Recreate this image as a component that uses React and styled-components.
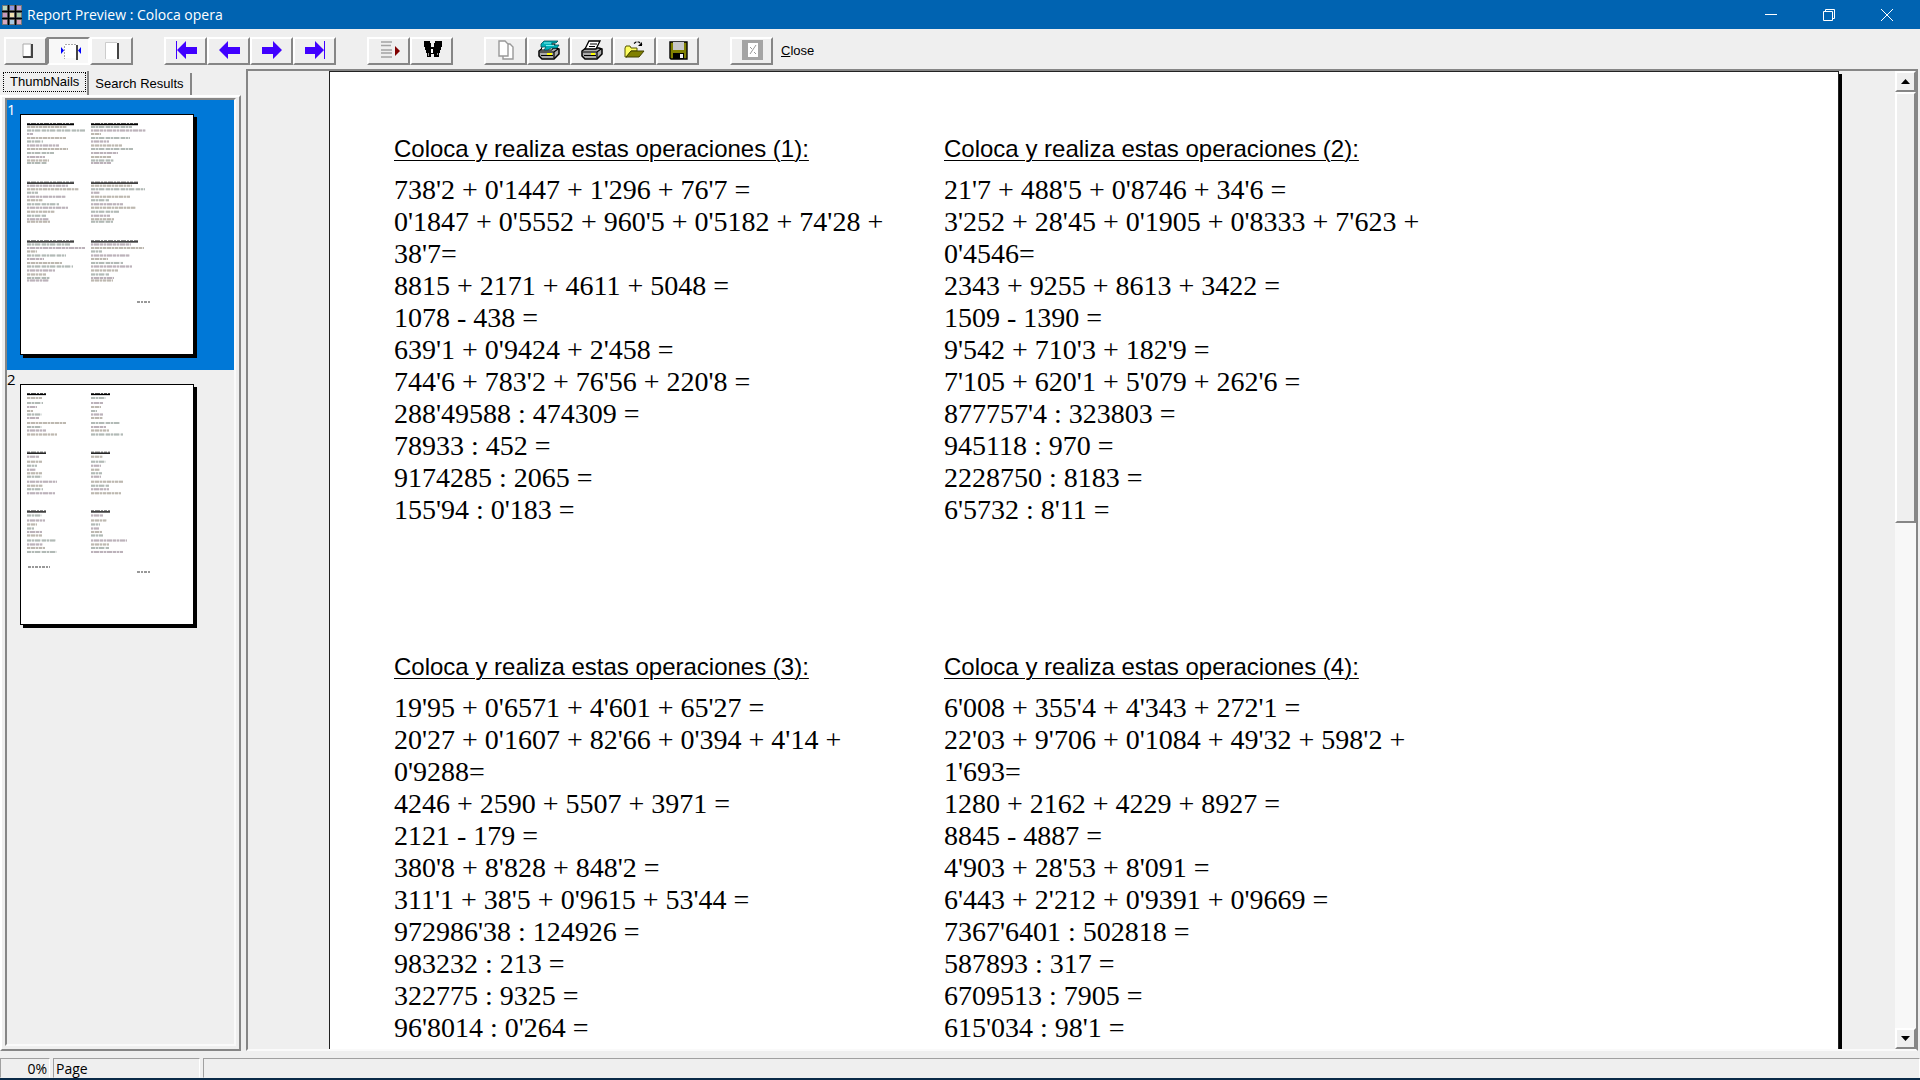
import React from 'react'
import styled, { createGlobalStyle, css } from 'styled-components'

const GlobalStyle = createGlobalStyle`
	* {
		box-sizing: border-box;
	}

	body {
		margin: 0;
		background: #efefef;
		color: #000;
		font-family: 'Liberation Sans', Arial, sans-serif;
		font-size: 13px;
	}

	button {
		padding: 0;
		color: inherit;
		font: inherit;
	}
`

const raised = css`
	border: 2px solid;
	border-color: #fff #868686 #868686 #fff;
`

const Window = styled.div`
	display: flex;
	flex-direction: column;
	height: 100vh;
	overflow: hidden;
	border-bottom: 2px solid #0a2a48;
`

/* title bar */

const TitleBar = styled.header`
	display: flex;
	align-items: center;
	flex: none;
	height: 29px;
	padding: 0 4px 0 2px;
	background: #0063b1;
	color: #fff;
`

const Title = styled.h1`
	flex: 1;
	margin: 0 0 0 5px;
	font-family: 'Open Sans', 'Noto Sans', sans-serif;
	font-size: 14px;
	font-weight: 400;
	line-height: 20px;
`

const CaptionButton = styled.button`
	display: flex;
	align-items: center;
	justify-content: center;
	width: 58px;
	height: 28px;
	border: 0;
	background: none;
`

/* toolbar */

const Toolbar = styled.div`
	display: flex;
	align-items: center;
	flex: none;
	gap: 31px;
	height: 40px;
	padding: 3px 4px 0;
`

const ToolGroup = styled.div`
	display: flex;
	align-items: center;
`

const ToolButton = styled.button`
	display: flex;
	align-items: center;
	justify-content: center;
	width: 43px;
	height: 28px;
	background: #efefef;
	${raised}
	${props =>
		props.$pressed &&
		css`
			background: #f8f8f8;
			border-color: #868686 #fff #fff #868686;
		`}
`

const CloseButton = styled.button`
	margin-left: 8px;
	border: 0;
	background: none;
	line-height: 20px;
`

/* side panel */

const Body = styled.div`
	display: flex;
	flex: 1;
	gap: 5px;
	min-height: 0;
`

const Side = styled.aside`
	display: flex;
	flex-direction: column;
	flex: none;
	width: 241px;
`

const Tabs = styled.div`
	display: flex;
	align-items: flex-end;
	padding-left: 3px;
	height: 26px;
`

const Tab = styled.button`
	height: 22px;
	padding: 0 6px;
	border: 0;
	border-right: 2px solid #868686;
	background: none;
	line-height: 20px;
	${props =>
		props.$active &&
		css`
			height: 24px;
			padding: 0 1px 3px 0;
			line-height: 18px;
		`}
`

const FocusMark = styled.span`
	display: block;
	padding: 0 6px;
	border: 1px dotted #000;
`

const TabPanel = styled.div`
	display: flex;
	flex: 1;
	min-height: 0;
	padding: 1px 3px 3px;
	${raised}
`

const ThumbList = styled.div`
	flex: 1;
	overflow: hidden;
	border: 2px solid;
	border-color: #868686 #fafafa #fafafa #868686;
`

const ThumbItem = styled.button`
	display: grid;
	grid-template-columns: 13px auto;
	align-items: start;
	justify-content: start;
	width: 100%;
	height: 270px;
	border: 0;
	background: ${props => (props.$selected ? '#0078d7' : 'transparent')};
	color: ${props => (props.$selected ? '#fff' : '#000')};
	font-family: 'Open Sans', 'Noto Sans', sans-serif;
	font-size: 15px;
	line-height: 18px;
	text-align: left;
`

const ThumbPage = styled.svg`
	width: 174px;
	height: 241px;
	margin-top: 14px;
	border: 1px solid #000;
	background: #fff;
	box-shadow: 3px 3px 0 #000;
`

/* document area */

const Viewer = styled.main`
	display: flex;
	flex: 1;
	min-width: 0;
	margin-right: 2px;
	border: 2px solid;
	border-color: #868686 #868686 #fafafa #868686;
`

const Canvas = styled.div`
	display: flex;
	flex: 1;
	min-width: 0;
	overflow: hidden;
	padding: 0 56px 0 81px;
`

const Sheet = styled.article`
	display: grid;
	flex: 1;
	grid-template-columns: repeat(2, minmax(0, 510px));
	align-content: start;
	gap: 125px 40px;
	padding: 61px 0 0 64px;
	border: 1px solid #222;
	border-bottom: 0;
	background: #fff;
	box-shadow: 3px 3px 0 #000;
`

const Exercise = styled.section`
	line-height: 32px;
`

const ExerciseTitle = styled.h2`
	margin: 0 0 9px;
	font-size: 24px;
	font-weight: 400;
	text-decoration: underline;
	text-decoration-thickness: 1px;
	text-underline-offset: 3px;
`

const Operation = styled.p`
	margin: 0;
	font-family: 'Liberation Serif', 'Times New Roman', serif;
	font-size: 28px;
`

const ScrollBar = styled.div`
	display: flex;
	flex-direction: column;
	flex: none;
	width: 21px;
	background: #f8f8f8;
`

const ScrollButton = styled.button`
	display: flex;
	align-items: center;
	justify-content: center;
	height: 21px;
	background: #efefef;
	${raised}
`

const ScrollTrack = styled.div`
	flex: 1;
`

const ScrollThumb = styled.div`
	height: 46%;
	background: #efefef;
	${raised}
`

/* status bar */

const StatusBar = styled.footer`
	display: grid;
	grid-template-columns: 50px 147px 1fr;
	flex: none;
	gap: 3px;
	padding-top: 7px;
	font-family: 'Open Sans', 'Noto Sans', sans-serif;
	font-size: 14px;
	line-height: 20px;
`

const StatusCell = styled.div`
	height: 20px;
	padding: 0 2px;
	border: 1px solid;
	border-color: #a0a0a0 #fff #efefef #a0a0a0;
	text-align: ${props => props.$align || 'left'};
`

const Icon = ({ children }) => (
	<svg width="30" height="22" viewBox="0 0 30 22" aria-hidden="true">
		{children}
	</svg>
)

const ARROW = '#4000ff'

const icons = {
	wholePage: (
		<Icon>
			<path d="M12 4h8v13h-8z" fill="#fff" stroke="#aaa" />
			<path d="M20 4h2v14H12v-2h8z" fill="#444" />
		</Icon>
	),
	pageWidth: (
		<Icon>
			<path d="M10 4h13v14H10z" fill="#fff" />
			<path d="M11 4.5h11M10.500 6v13" stroke="#aaa" strokeDasharray="2 1" />
			<path d="M22 5h2v15h-2z" fill="#444" />
			<path d="M7 7v7l3-3.500zM27 7v7l-3-3.500z" fill="#00f" />
		</Icon>
	),
	actualSize: (
		<Icon>
			<path d="M8 3h12v16H8z" fill="#fff" />
			<path d="M8.500 19V2.500H20" fill="none" stroke="#ccc" />
			<path d="M20 3h2v16h-2z" fill="#444" />
		</Icon>
	),
	first: (
		<Icon>
			<path d="M5 1h1v18H5zM6 10l9-9v6h11v7H15v5z" fill={ARROW} />
		</Icon>
	),
	prev: (
		<Icon>
			<path d="M5 10l9-9v6h12v7H14v5z" fill={ARROW} />
		</Icon>
	),
	next: (
		<Icon>
			<path d="M25 10l-9-9v6H5v7h11v5z" fill={ARROW} />
		</Icon>
	),
	last: (
		<Icon>
			<path d="M24 1h1v18h-1zM24 10l-9-9v6H5v7h10v5z" fill={ARROW} />
		</Icon>
	),
	goTo: (
		<Icon>
			<path d="M7 2h11M7 5.500h10M7 10h11M7 13h11M7 17h11" stroke="#a4a4a4" strokeWidth="1.400" />
			<path d="M21 6v10l5-5z" fill="#800000" />
		</Icon>
	),
	find: (
		<Icon>
			<path d="M7 1h6v2h1v4h3V3h1V1h7v6h-1v3h-1v3h-1v4h-5v-3h-3v3h-4v-4H9v-3H8V7H7z" />
			<path d="M14 9h2v4h-2z" fill="#fff" />
			<path d="M11.500 13v3M20.500 13v2" stroke="#bbb" strokeWidth=".8" />
		</Icon>
	),
	copy: (
		<Icon>
			<path d="M12 4h7l3 3v12H12z" fill="#fff" stroke="#999" strokeWidth="1.400" />
			<path d="M8 1h6l3 3v12H8z" fill="#fff" stroke="#999" strokeWidth="1.400" />
		</Icon>
	),
	printSetup: (
		<Icon>
			<path d="M5 11l4-3h13l3 1v5l-5 5H8l-3-3z" fill="#aaa" stroke="#000" strokeWidth="1.500" />
			<path d="M9 4h12l-3 6H7z" fill="#fff" stroke="#000" />
			<path d="M7 4l3-3h14l-2 2h-4v2h7l-2 3h-6l-3 2h-4l2-3H7z" fill="#00b0b8" stroke="#005058" strokeWidth=".8" />
			<path d="M10 3h7M12 5.500h8" stroke="#9ff" strokeWidth=".8" />
			<path d="M6 12h14l4-3M20 12v6M7 15.500h12" fill="none" stroke="#000" strokeWidth="1.200" />
			<path d="M13 13h5v2h-5z" fill="#ff0" />
		</Icon>
	),
	print: (
		<Icon>
			<path d="M5 11l4-3h13l3 1v5l-5 5H8l-3-3z" fill="#aaa" stroke="#000" strokeWidth="1.500" />
			<path d="M12 1h11l-4 8H8z" fill="#fff" stroke="#000" strokeWidth="1.300" />
			<path d="M13 4h7M12 6.500h6M6 12h14l4-3M20 12v6M7 15.500h12" fill="none" stroke="#000" strokeWidth="1.200" />
			<path d="M14 13h4v2h-4z" fill="#ff0" />
		</Icon>
	),
	open: (
		<Icon>
			<path d="M5 8l1-2h4l1 2h6v3h-6l-4 6H5z" fill="#ffff60" stroke="#555500" />
			<path d="M11 11h13l-5 6H6z" fill="#808000" stroke="#404000" />
			<path d="M14 3.500l2-1.500h3l3 3" fill="none" stroke="#000" strokeWidth="1.200" strokeDasharray="3 1" />
			<path d="M22 2v4h-4z" />
		</Icon>
	),
	save: (
		<Icon>
			<path d="M7 2h17v17H8l-1-1z" fill="#808000" stroke="#000" strokeWidth="1.400" />
			<path d="M10 2h11v8H10z" fill="#c8c8c8" />
			<path d="M10 13h11v6H10z" />
			<path d="M17 14h3v4h-3z" fill="#eee" />
		</Icon>
	),
	exit: (
		<Icon>
			<path d="M5 0h21v20H5z" fill="#a4a4a4" />
			<path d="M11 3h10v14H11z" fill="#fff" />
			<path d="M13 14l6-9M13 7l2 2M17 12l2 2" fill="none" stroke="#999" />
		</Icon>
	)
}

const toolGroups = [
	[
		['Whole page', 'wholePage'],
		['Page width', 'pageWidth'],
		['Actual size', 'actualSize']
	],
	[
		['First page', 'first'],
		['Previous page', 'prev'],
		['Next page', 'next'],
		['Last page', 'last']
	],
	[
		['Go to page', 'goTo'],
		['Find', 'find']
	],
	[
		['Copy', 'copy'],
		['Print setup', 'printSetup'],
		['Print', 'print'],
		['Open', 'open'],
		['Save', 'save']
	]
]

const exercises = [
	[
		"738'2 + 0'1447 + 1'296 + 76'7 =",
		"0'1847 + 0'5552 + 960'5 + 0'5182 + 74'28 + 38'7=",
		'8815 + 2171 + 4611 + 5048 =',
		'1078 - 438 =',
		"639'1 + 0'9424 + 2'458 =",
		"744'6 + 783'2 + 76'56 + 220'8 =",
		"288'49588 : 474309 =",
		'78933 : 452 =',
		'9174285 : 2065 =',
		"155'94 : 0'183 ="
	],
	[
		"21'7 + 488'5 + 0'8746 + 34'6 =",
		"3'252 + 28'45 + 0'1905 + 0'8333 + 7'623 + 0'4546=",
		'2343 + 9255 + 8613 + 3422 =',
		'1509 - 1390 =',
		"9'542 + 710'3 + 182'9 =",
		"7'105 + 620'1 + 5'079 + 262'6 =",
		"877757'4 : 323803 =",
		'945118 : 970 =',
		'2228750 : 8183 =',
		"6'5732 : 8'11 ="
	],
	[
		"19'95 + 0'6571 + 4'601 + 65'27 =",
		"20'27 + 0'1607 + 82'66 + 0'394 + 4'14 + 0'9288=",
		'4246 + 2590 + 5507 + 3971 =',
		'2121 - 179 =',
		"380'8 + 8'828 + 848'2 =",
		"311'1 + 38'5 + 0'9615 + 53'44 =",
		"972986'38 : 124926 =",
		'983232 : 213 =',
		'322775 : 9325 =',
		"96'8014 : 0'264 ="
	],
	[
		"6'008 + 355'4 + 4'343 + 272'1 =",
		"22'03 + 9'706 + 0'1084 + 49'32 + 598'2 + 1'693=",
		'1280 + 2162 + 4229 + 8927 =',
		'8845 - 4887 =',
		"4'903 + 28'53 + 8'091 =",
		"6'443 + 2'212 + 0'9391 + 0'9669 =",
		"7367'6401 : 502818 =",
		'587893 : 317 =',
		'6709513 : 7905 =',
		"615'034 : 98'1 ="
	]
]

// line widths of each block, left to right and top to bottom
const thumbs = [
	{
		heading: 47,
		rows: [12, 15.5, 19, 23, 26.5, 30.5, 34, 38, 42, 45.5, 48],
		blocks: [
			[40, 58, 6, 39, 16, 32, 41, 27, 18, 22, 20],
			[41, 55, 10, 39, 18, 31, 42, 27, 20, 23, 20],
			[41, 52, 11, 39, 16, 32, 41, 28, 19, 22, 23],
			[41, 54, 9, 39, 18, 32, 45, 28, 19, 23, 22],
			[43, 58, 10, 39, 17, 35, 46, 28, 19, 23, 22],
			[40, 53, 11, 39, 17, 32, 41, 27, 18, 23, 22]
		],
		notes: [[117, 187, 14]]
	},
	{
		heading: 19,
		rows: [13, 18, 22, 26, 29.5, 33, 38, 42, 45.5, 49.5],
		blocks: [
			[15, 16, 10, 6, 15, 12, 39, 15, 19, 30],
			[15, 12, 10, 6, 12, 12, 29, 15, 18, 32],
			[12, 15, 10, 9, 15, 15, 30, 16, 16, 28],
			[12, 15, 10, 9, 11, 10, 32, 18, 18, 30],
			[15, 18, 10, 7, 15, 15, 29, 16, 18, 30],
			[12, 16, 9, 8, 11, 12, 36, 18, 18, 32]
		],
		notes: [[8, 182, 22], [117, 187, 14]]
	}
]

const dashes = ['3 1 4 1 2 1', '4 1 2 1 5 2', '2 1 5 1 3 1']
const inks = ['#bdb8b0', '#b2bab6', '#bcb2ba']

const Thumb = ({ heading, rows, blocks, notes }) => (
	<ThumbPage viewBox="0 0 172 239" aria-hidden="true">
		{blocks.map((widths, b) => {
			const x = b % 2 ? 70 : 6
			const top = Math.floor(b / 2) * 58.7
			return (
				<g key={b} transform={`translate(${x} ${top})`}>
					<path d={`M0 9.500h${heading}`} stroke="#000" strokeWidth="1.300" />
					<path d={`M0 8.500h${heading}`} stroke="#444" strokeDasharray="3 1 5 1 2 1" />
					{widths.map((w, i) => (
						<g key={i} stroke={inks[(i + b) % 3]}>
							<path d={`M0 ${rows[i]}h${w}`} strokeWidth="2" strokeOpacity=".4" />
							<path d={`M0 ${rows[i]}h${w}`} strokeWidth="2" strokeDasharray={dashes[(i + b) % 3]} />
						</g>
					))}
				</g>
			)
		})}
		{notes.map(([x, y, w]) => (
			<path key={x} d={`M${x - 1} ${y}h${w}`} stroke="#999" strokeWidth="2" strokeDasharray="3 1 2 1" />
		))}
	</ThumbPage>
)

const cellColors = ['#b8d8c0', '#9098e0', '#c0a0d0', '#c898b8', '#f0e0b0', '#a8c8a0', '#d8a8c0', '#a8c8e0', '#d8a0b8']

const AppIcon = () => (
	<svg width="20" height="20" viewBox="0 0 20 20" aria-hidden="true">
		<path d="M0 0h20v20H0z" fill="#777" />
		{cellColors.map((fill, i) => (
			<rect key={i} x={1 + (i % 3) * 7} y={1 + Math.floor(i / 3) * 7} width="4" height="4" fill={fill} />
		))}
		<path d="M6.500 0v20M13.500 0v20M0 6.500h20M0 13.500h20" stroke="#000" strokeWidth="1.600" />
	</svg>
)

const CaptionIcon = ({ d }) => (
	<svg width="14" height="14" viewBox="0 0 14 14" fill="none" stroke="#fff" aria-hidden="true">
		<path d={d} />
	</svg>
)

class App extends React.Component {
	state = { zoom: 'pageWidth', thumb: 0 }

	render() {
		const { zoom, thumb } = this.state
		return (
			<Window>
				<GlobalStyle />
				<TitleBar>
					<AppIcon />
					<Title>Report Preview : Coloca opera</Title>
					<CaptionButton aria-label="Minimize">
						<CaptionIcon d="M1 6.500h12" />
					</CaptionButton>
					<CaptionButton aria-label="Restore">
						<CaptionIcon d="M1.500 3.500h9v9h-9zM3.500 3.500v-2h9v9h-2" />
					</CaptionButton>
					<CaptionButton aria-label="Close window">
						<CaptionIcon d="M1 1l12 12M13 1L1 13" />
					</CaptionButton>
				</TitleBar>

				<Toolbar>
					{toolGroups.map((group, g) => (
						<ToolGroup key={g}>
							{group.map(([label, icon]) => (
								<ToolButton
									key={icon}
									aria-label={label}
									$pressed={icon === zoom}
									onClick={g === 0 ? () => this.setState({ zoom: icon }) : undefined}
								>
									{icons[icon]}
								</ToolButton>
							))}
						</ToolGroup>
					))}
					<ToolGroup>
						<ToolButton aria-label="Exit" disabled>
							{icons.exit}
						</ToolButton>
						<CloseButton>
							<u>C</u>lose
						</CloseButton>
					</ToolGroup>
				</Toolbar>

				<Body>
					<Side>
						<Tabs role="tablist">
							<Tab role="tab" aria-selected="true" $active>
								<FocusMark>ThumbNails</FocusMark>
							</Tab>
							<Tab role="tab" aria-selected="false">
								Search Results
							</Tab>
						</Tabs>
						<TabPanel role="tabpanel">
							<ThumbList>
								{thumbs.map((page, i) => (
									<ThumbItem key={i} $selected={i === thumb} onClick={() => this.setState({ thumb: i })}>
										{i + 1}
										<Thumb {...page} />
									</ThumbItem>
								))}
							</ThumbList>
						</TabPanel>
					</Side>

					<Viewer>
						<Canvas>
							<Sheet>
								{exercises.map((operations, i) => (
									<Exercise key={i}>
										<ExerciseTitle>Coloca y realiza estas operaciones ({i + 1}):</ExerciseTitle>
										{operations.map(operation => (
											<Operation key={operation}>{operation}</Operation>
										))}
									</Exercise>
								))}
							</Sheet>
						</Canvas>
						<ScrollBar>
							<ScrollButton aria-label="Scroll up">
								<svg width="9" height="5" viewBox="0 0 9 5">
									<path d="M0 5l4.500-5L9 5z" />
								</svg>
							</ScrollButton>
							<ScrollTrack>
								<ScrollThumb />
							</ScrollTrack>
							<ScrollButton aria-label="Scroll down">
								<svg width="9" height="5" viewBox="0 0 9 5">
									<path d="M0 0l4.500 5L9 0z" />
								</svg>
							</ScrollButton>
						</ScrollBar>
					</Viewer>
				</Body>

				<StatusBar>
					<StatusCell $align="right">0%</StatusCell>
					<StatusCell>Page</StatusCell>
					<StatusCell />
				</StatusBar>
			</Window>
		)
	}
}

export default App
